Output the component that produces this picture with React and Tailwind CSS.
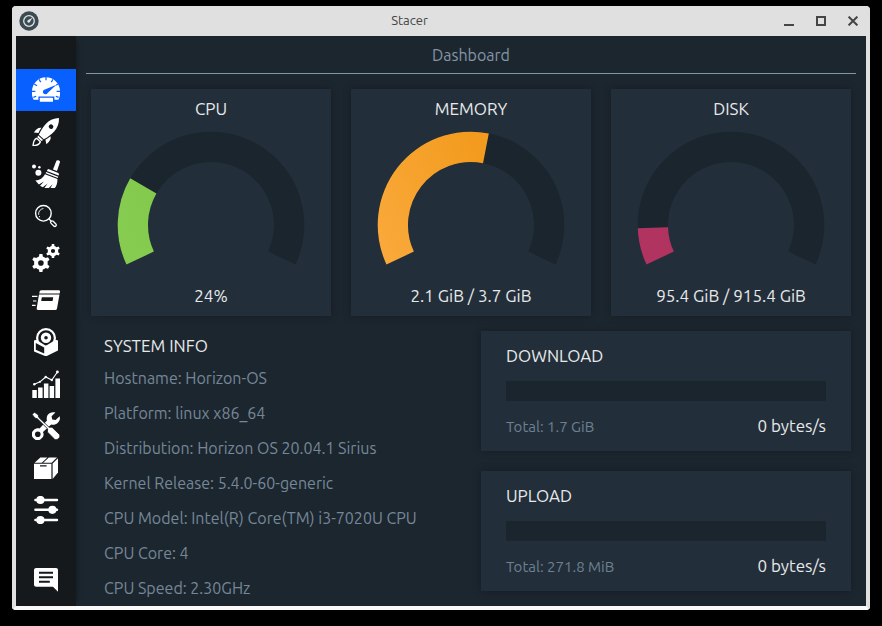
import React from "react";

/* ---------- icons ---------- */

function Icon({ children }) {
  return (
    <svg viewBox="0 0 28 28" className="h-7 w-7" fill="currentColor" aria-hidden="true">
      {children}
    </svg>
  );
}

function gear(cx, cy, root, tip, teeth) {
  const step = (Math.PI * 2) / teeth;
  const at = (r, a) => `${(cx + r * Math.sin(a)).toFixed(2)} ${(cy - r * Math.cos(a)).toFixed(2)}`;
  let d = "";
  for (let i = 0; i < teeth; i++) {
    const a = i * step;
    d += `${i ? "L" : "M"}${at(root, a - step * 0.27)}L${at(tip, a - step * 0.16)}L${at(tip, a + step * 0.16)}L${at(root, a + step * 0.27)}`;
    d += `A${root} ${root} 0 0 1 ${at(root, a + step * 0.73)}`;
  }
  return d + "Z";
}

function hole(cx, cy, r) {
  return `M${cx - r} ${cy}a${r} ${r} 0 1 0 ${2 * r} 0a${r} ${r} 0 1 0 ${-2 * r} 0Z`;
}

const DashboardIcon = () => (
  <Icon>
    <path d="M1.6 23.8A14 14 0 0 1 0 15.3A14 14 0 0 1 28 15.3A14 14 0 0 1 26.4 23.8H22.4V20.4H6.4V23.8Z" />
    <rect x="7.8" y="21.8" width="13.2" height="4" rx="0.6" />
    <g stroke="#0860ff" strokeWidth="1.2">
      <path d="M14 0.8V4.2M7 3.2L8.7 6.1M21 3.2L19.3 6.1M2.2 8.1L5 9.8M25.8 8.1L24.2 9.2M0 15.3H3.4M28 15.3H24.6M1.4 21.4L4.2 20.2M26.6 21.4L23.8 20.2" />
    </g>
    <path fill="#0860ff" d="M24.4 8.8L15.6 17A2.5 2.5 0 1 1 12.9 13.4Z" />
  </Icon>
);

const RocketIcon = () => (
  <Icon>
    <g transform="translate(14 14) rotate(43)">
      <path fillRule="evenodd" d="M0 -19C3.6 -15.6 5.6 -11 5.6 -6C5.6 -1.6 4.8 2.6 3.4 6.8H-3.4C-4.8 2.6 -5.6 -1.6 -5.6 -6C-5.6 -11 -3.6 -15.6 0 -19ZM-2.3 -7.4a2.3 2.3 0 1 0 4.6 0a2.3 2.3 0 1 0 -4.6 0Z" />
      <path d="M-3.3 7.8H3.3L2.7 9.8H-2.7Z" />
      <path d="M-6.2 0C-8.8 1.6 -9.2 4.6 -8.6 8.6L-4.8 6C-5.6 4 -6 2 -6.2 0ZM6.2 0C8.8 1.6 9.2 4.6 8.6 8.6L4.8 6C5.6 4 6 2 6.2 0Z" />
      <path d="M-2.5 11C-4.2 14 -2 16.4 0 19C2 16.4 4.2 14 2.5 11Z" fill="none" stroke="currentColor" strokeWidth="1.4" />
    </g>
  </Icon>
);

const BroomIcon = () => (
  <Icon>
    <circle cx="2" cy="6.4" r="2" />
    <circle cx="7.4" cy="7.2" r="1.2" />
    <circle cx="6.4" cy="12.8" r="3" />
    <path d="M24.4 0.8C25 -0.4 28.2 0.2 28 2L25 11L21 9.6Z" />
    <path d="M16.2 9L26.4 13C27 14 27 14.8 26.6 15.6L14.8 11C15.2 10 15.6 9.4 16.2 9Z" />
    <path d="M14.2 12L26.2 16.7L25.8 18L13.6 13.2Z" />
    <path d="M13 14.2L25.4 19C25.6 22.8 24.6 26 22.6 28.2H18.4L20.6 24.2L16.8 28H12.4L15.6 23.6L10.8 27.2L8 25.8L12 21.6L6.8 24.4L3.4 20.4C7.8 20.2 11 18 13 14.2Z" />
  </Icon>
);

const SearchIcon = () => (
  <Icon>
    <g fill="none" stroke="currentColor" strokeLinecap="round">
      <circle cx="11.4" cy="11.3" r="7.8" strokeWidth="1.4" />
      <path d="M6.6 12.4A5 5 0 0 1 11 6.6" strokeWidth="0.9" />
      <path d="M7.4 14.6L7.5 14.7" strokeWidth="1.1" />
      <path d="M17 17L19 19" strokeWidth="1.2" />
      <rect x="-1.5" y="-3.3" width="3" height="6.8" rx="1.5" transform="translate(21.4 21.6) rotate(-45)" strokeWidth="1.3" />
    </g>
  </Icon>
);

const GearsIcon = () => (
  <Icon>
    <path fillRule="evenodd" d={gear(8.9, 19, 6.8, 9.2, 6) + hole(8.9, 19, 2.8)} />
    <path fillRule="evenodd" d={gear(21, 7, 5.2, 7.2, 6) + hole(21, 7, 2.1)} />
  </Icon>
);

const ServicesIcon = () => (
  <Icon>
    <path d="M9.6 4.2H26.6Q28.2 4.2 28 5.6L27.7 7.4H7.2L7.7 5.6Q8.1 4.2 9.6 4.2Z" />
    <path fillRule="evenodd" d="M7 8.6H27.5L25 22.4Q24.7 24 23.2 24H6Q4.3 24 4.7 22.2ZM9.8 11.2L9.2 15H20.6L21.2 11.2Z" />
    <path d="M0 9.8H5.4V11H0ZM1 14.4H4.4V15.6H1ZM0 18.8H3.6V20H0Z" />
  </Icon>
);

const UninstallerIcon = () => (
  <Icon>
    <path fillRule="evenodd" d={hole(14, 10, 10) + hole(14, 10, 7.8)} />
    <path fillRule="evenodd" d={hole(14, 9.8, 5.2) + hole(14, 9.8, 1.8)} />
    <path fill="#15191c" d="M1 14L13.6 18.6L27 14V29H1Z" />
    <path fillRule="evenodd" d="M2 12.4L4.2 11.8L13.8 17.8L23.8 11.8L26 12.4V22.4L14 28.4L2 23.4ZM3.8 15V21.8L12.2 25.4V19.4Z" />
  </Icon>
);

const ResourcesIcon = () => (
  <Icon>
    <path d="M0.3 20H4.8V28H0.3ZM6.1 17.4H10.6V28H6.1ZM11.9 13.4H16.4V28H11.9ZM17.6 16H22.1V28H17.6ZM23.4 8.4H28V28H23.4Z" />
    <path d="M2.3 14.2L8 11.8L13.7 7L19.8 10L25.4 2" fill="none" stroke="currentColor" strokeWidth="1.1" />
    <circle cx="2.3" cy="14.2" r="1.2" />
    <circle cx="8" cy="11.8" r="1" />
    <circle cx="13.7" cy="7" r="1.2" />
    <circle cx="19.8" cy="10" r="1.2" />
    <circle cx="25.4" cy="2" r="1.4" />
  </Icon>
);

const ToolsIcon = () => (
  <Icon>
    <path fillRule="evenodd" d="M27.6 4.2L23.6 8L20.2 7.4L19.6 4.2L23.4 0.4C20.4 -0.4 17 0.6 15.6 3C14.6 4.8 14.4 6.6 15 8.6L7.6 16.4C5.4 16 3.2 16.6 1.6 18.2A5.8 5.8 0 1 0 11 20L19.2 12.6C21.4 13.2 24 12.6 25.8 10.8C27.8 8.8 28.4 6.6 27.6 4.2ZM3 22.2a2.8 2.8 0 1 0 5.6 0a2.8 2.8 0 1 0 -5.6 0Z" />
    <path d="M0.2 2.4L2.4 0.2L6.2 2.8L6.8 5.4L17 15.2L20 15.2L27.4 22.4C29 25.2 25.6 28.6 22.8 27.4L15.4 20L15.6 16.8L5.4 6.8L2.8 6Z" stroke="#15191c" strokeWidth="0.8" />
  </Icon>
);

const PackageIcon = () => (
  <Icon>
    <path d="M8.4 3.4H15.4L9.8 8.8H2.6ZM16.8 3.4H25L19.6 8.8H11.2Z" />
    <path fillRule="evenodd" d="M2 9.8H19.4V25H2ZM8 11.2V12.4H14.6V11.2Z" />
    <path d="M20.6 9.4L26 4.2V18.6L20.6 25Z" />
  </Icon>
);

const SlidersIcon = () => (
  <Icon>
    <path d="M3.4 4H25M3.4 13.8H25M3.4 24H25" stroke="currentColor" strokeWidth="2.4" strokeLinecap="round" />
    <circle cx="8.4" cy="4" r="4.1" />
    <circle cx="20.4" cy="13.8" r="4.1" />
    <circle cx="8.4" cy="24" r="4.1" />
  </Icon>
);

const FeedbackIcon = () => (
  <Icon>
    <path fillRule="evenodd" d="M4.2 3H24Q26 3 26 5V26.8L21 21.8H4.2Q2 21.8 2 19.8V5Q2 3 4.2 3ZM7 6.8V8.8H21V6.8ZM7 11.2V13.2H21V11.2ZM7 15.8V17.8H17.8V15.8Z" />
  </Icon>
);

/* ---------- data ---------- */

const NAV = [
  { label: "Dashboard", icon: DashboardIcon, active: true },
  { label: "Startup Apps", icon: RocketIcon },
  { label: "System Cleaner", icon: BroomIcon },
  { label: "Search", icon: SearchIcon },
  { label: "Services", icon: GearsIcon },
  { label: "Processes", icon: ServicesIcon },
  { label: "Uninstaller", icon: UninstallerIcon },
  { label: "Resources", icon: ResourcesIcon },
  { label: "Helpers", icon: ToolsIcon },
  { label: "APT Repository Manager", icon: PackageIcon },
  { label: "Settings", icon: SlidersIcon },
];

const GAUGES = [
  { id: "cpu", title: "CPU", sweep: 55, value: "24%", from: "#85cc50", to: "#7dc546" },
  { id: "memory", title: "MEMORY", sweep: 126, value: "2.1 GiB / 3.7 GiB", from: "#f9a839", to: "#f29b1e" },
  { id: "disk", title: "DISK", sweep: 23, value: "95.4 GiB / 915.4 GiB", from: "#b03360", to: "#ad305d" },
];

const INFO = [
  "Hostname: Horizon-OS",
  "Platform: linux x86_64",
  "Distribution: Horizon OS 20.04.1 Sirius",
  "Kernel Release: 5.4.0-60-generic",
  "CPU Model: Intel(R) Core(TM) i3-7020U CPU",
  "CPU Core: 4",
  "CPU Speed: 2.30GHz",
];

/* ---------- parts ---------- */

function arc(sweep) {
  const point = (r, deg) => {
    const a = ((155 + deg) * Math.PI) / 180;
    return `${(94 + r * Math.cos(a)).toFixed(2)} ${(94 + r * Math.sin(a)).toFixed(2)}`;
  };
  const large = sweep > 180 ? 1 : 0;
  return `M${point(93.3, 0)}A93.3 93.3 0 ${large} 1 ${point(93.3, sweep)}L${point(63, sweep)}A63 63 0 ${large} 0 ${point(63, 0)}Z`;
}

function GaugeCard({ id, title, sweep, value, from, to }) {
  return (
    <section className="flex flex-1 flex-col items-center bg-[#222f3b] shadow-[0_0_8px_rgba(0,0,0,0.25)]">
      <h2 className="h-10 text-[17px] leading-10 text-[#e8e8e8]">{title}</h2>
      <svg viewBox="0 0 188 147" className="mt-0.5 h-[147px] w-[188px]" role="img" aria-label={title}>
        <defs>
          <linearGradient id={id} gradientUnits="userSpaceOnUse" x1="0" y1="94" x2="112" y2="40">
            <stop offset="0" stopColor={from} />
            <stop offset="1" stopColor={to} />
          </linearGradient>
        </defs>
        <path d={arc(230)} fill="#1b252e" />
        <path d={arc(sweep)} fill={`url(#${id})`} />
      </svg>
      <p className="h-[38px] text-[17px] leading-9 text-[#e8e8e8]">{value}</p>
    </section>
  );
}

function NetworkCard({ title, total }) {
  return (
    <section className="h-[120px] bg-[#222f3b] px-[25px] shadow-[0_0_8px_rgba(0,0,0,0.25)]">
      <h2 className="h-[50px] text-[17px] leading-[50px] text-[#e8e8e8]">{title}</h2>
      <div className="h-5 bg-[#1b252e]" />
      <div className="flex items-baseline justify-between leading-[50px]">
        <span className="text-[15px] text-[#6f8090]">{total}</span>
        <span className="text-[17px] text-[#e8e8e8]">0 bytes/s</span>
      </div>
    </section>
  );
}

function TitleBar() {
  return (
    <header className="flex h-[30px] shrink-0 items-center rounded-t bg-[#e0e0e0] pr-px text-[#454545]">
      <div className="flex w-[34px] justify-center">
        <svg viewBox="0 0 20 20" className="h-5 w-5" aria-hidden="true">
          <circle cx="10" cy="10" r="9.7" fill="#3c4a52" />
          <circle cx="10" cy="10" r="5.3" fill="none" stroke="#dfe5e8" strokeWidth="1.3" />
          <path d="M13.4 6.8L11 10.8A1.4 1.4 0 1 1 9.2 9Z" fill="#dfe5e8" />
        </svg>
      </div>
      <h1 className="flex-1 text-center text-[13px]">Stacer</h1>
      <button type="button" aria-label="Minimize" className="flex h-[30px] w-8 items-center justify-center">
        <svg viewBox="0 0 10 10" className="h-2.5 w-2.5"><path d="M0 8H10V10H0Z" fill="currentColor" /></svg>
      </button>
      <button type="button" aria-label="Maximize" className="flex h-[30px] w-8 items-center justify-center">
        <svg viewBox="0 0 10 10" className="h-2.5 w-2.5"><path d="M1 1H9V9H1Z" fill="none" stroke="currentColor" strokeWidth="2" /></svg>
      </button>
      <button type="button" aria-label="Close" className="flex h-[30px] w-8 items-center justify-center">
        <svg viewBox="0 0 10 10" className="h-2.5 w-2.5"><path d="M0.6 0.6L9.4 9.4M9.4 0.6L0.6 9.4" fill="none" stroke="currentColor" strokeWidth="2" /></svg>
      </button>
    </header>
  );
}

function NavButton({ item }) {
  const ItemIcon = item.icon;
  return (
    <button
      type="button"
      aria-label={item.label}
      className={
        item.active
          ? "flex h-[42px] w-full items-center justify-center bg-[#0860ff]"
          : "flex h-[42px] w-full items-center justify-center"
      }
    >
      <ItemIcon />
    </button>
  );
}

export default function App() {
  return (
    <div className="flex min-h-screen flex-col bg-black px-3 pt-1.5 pb-4 font-['Ubuntu','Noto_Sans',sans-serif]">
      <div className="flex flex-1 flex-col overflow-hidden rounded bg-[#e0e0e0]">
        <TitleBar />
        <div className="flex flex-1 border-x-4 border-b-4 border-x-[#e0e0e0] border-b-[#fafafa]">
          <nav className="z-10 flex w-[60px] shrink-0 flex-col bg-[#15191c] pt-[33px] pb-1.5 text-white shadow-[5px_0_5px_-4px_rgba(0,0,0,0.3)]">
            {NAV.map((item) => (
              <NavButton key={item.label} item={item} />
            ))}
            <div className="mt-auto">
              <NavButton item={{ label: "Feedback", icon: FeedbackIcon }} />
            </div>
          </nav>
          <main className="min-w-0 flex-1 bg-[#1c262f]">
            <h2 className="mx-2.5 h-[38px] border-b border-[#8396a9] text-center text-base leading-[38px] text-[#8495a6]">
              Dashboard
            </h2>
            <div className="flex gap-5 p-[15px]">
              {GAUGES.map((gauge) => (
                <GaugeCard key={gauge.id} {...gauge} />
              ))}
            </div>
            <div className="grid grid-cols-2 gap-5 px-[15px]">
              <section className="pl-[13px]">
                <h2 className="h-[30px] text-[17px] leading-[30px] text-[#e8e8e8]">SYSTEM INFO</h2>
                <ul>
                  {INFO.map((line) => (
                    <li key={line} className="h-[35px] text-base leading-[35px] whitespace-nowrap text-[#768797]">
                      {line}
                    </li>
                  ))}
                </ul>
              </section>
              <div className="flex flex-col gap-5">
                <NetworkCard title="DOWNLOAD" total="Total: 1.7 GiB" />
                <NetworkCard title="UPLOAD" total="Total: 271.8 MiB" />
              </div>
            </div>
          </main>
        </div>
      </div>
    </div>
  );
}
